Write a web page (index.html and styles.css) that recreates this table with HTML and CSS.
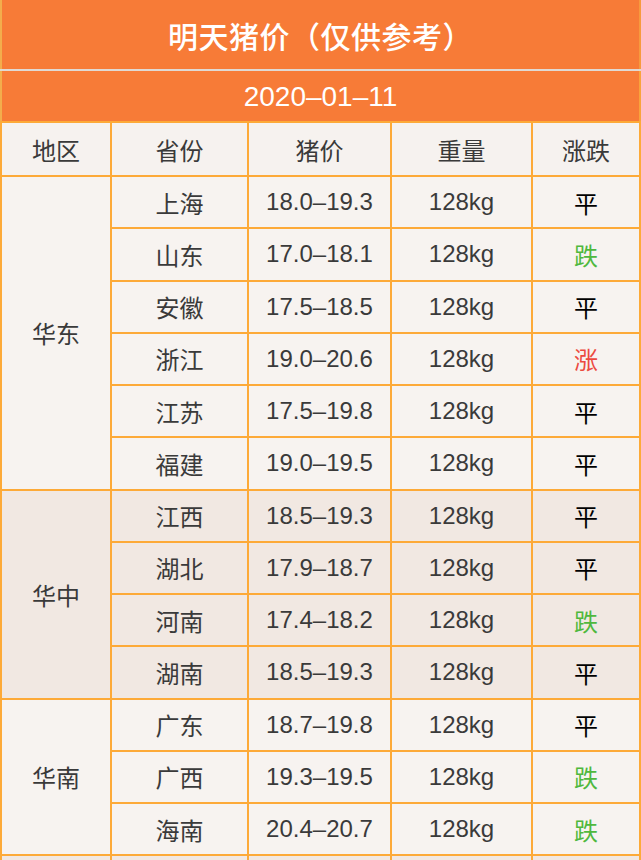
FILE: index.html
```html
<!DOCTYPE html>
<html lang="zh-CN">
<head>
<meta charset="utf-8">
<title>明天猪价</title>
<link rel="stylesheet" href="styles.css">
</head>
<body>
<div class="sheet">
  <div class="title">明天猪价（仅供参考）</div>
  <div class="date">2020–01–11</div>
  <div class="grid">
    <div class="cell head">地区</div>
    <div class="cell head">省份</div>
    <div class="cell head">猪价</div>
    <div class="cell head">重量</div>
    <div class="cell head">涨跌</div>

    <div class="cell region r6">华东</div>
    <div class="cell">上海</div><div class="cell">18.0–19.3</div><div class="cell">128kg</div><div class="cell flat">平</div>
    <div class="cell">山东</div><div class="cell">17.0–18.1</div><div class="cell">128kg</div><div class="cell down">跌</div>
    <div class="cell">安徽</div><div class="cell">17.5–18.5</div><div class="cell">128kg</div><div class="cell flat">平</div>
    <div class="cell">浙江</div><div class="cell">19.0–20.6</div><div class="cell">128kg</div><div class="cell up">涨</div>
    <div class="cell">江苏</div><div class="cell">17.5–19.8</div><div class="cell">128kg</div><div class="cell flat">平</div>
    <div class="cell">福建</div><div class="cell">19.0–19.5</div><div class="cell">128kg</div><div class="cell flat">平</div>

    <div class="cell alt region r4">华中</div>
    <div class="cell alt">江西</div><div class="cell alt">18.5–19.3</div><div class="cell alt">128kg</div><div class="cell alt flat">平</div>
    <div class="cell alt">湖北</div><div class="cell alt">17.9–18.7</div><div class="cell alt">128kg</div><div class="cell alt flat">平</div>
    <div class="cell alt">河南</div><div class="cell alt">17.4–18.2</div><div class="cell alt">128kg</div><div class="cell alt down">跌</div>
    <div class="cell alt">湖南</div><div class="cell alt">18.5–19.3</div><div class="cell alt">128kg</div><div class="cell alt flat">平</div>

    <div class="cell region r3">华南</div>
    <div class="cell">广东</div><div class="cell">18.7–19.8</div><div class="cell">128kg</div><div class="cell flat">平</div>
    <div class="cell">广西</div><div class="cell">19.3–19.5</div><div class="cell">128kg</div><div class="cell down">跌</div>
    <div class="cell">海南</div><div class="cell">20.4–20.7</div><div class="cell">128kg</div><div class="cell down">跌</div>

    <div class="cell alt"></div><div class="cell alt"></div><div class="cell alt"></div><div class="cell alt"></div><div class="cell alt"></div>
  </div>
</div>
</body>
</html>
```

FILE: styles.css
```css
html, body {
  margin: 0;
  padding: 0;
  background: #f7f3f0;
}

.sheet {
  width: 641px;
  font-family: "Liberation Sans", "Noto Sans CJK SC", sans-serif;
}

.title {
  height: 69px;
  border-bottom: 2px solid #e0d9d3;
  background: #f77b37;
  box-shadow: inset 2px 0 0 #f3ad4c, inset -2px 0 0 #f79a3e;
  color: #ffffff;
  font-family: "Noto Sans CJK SC", sans-serif;
  font-weight: 500;
  font-size: 30px;
  display: flex;
  align-items: center;
  justify-content: center;
  letter-spacing: 0.5px;
}

.date {
  height: 50px;
  background: #f77b37;
  box-shadow: inset 2px 0 0 #f3ad4c, inset -2px 0 0 #f9a33c;
  color: #ffffff;
  font-size: 28px;
  display: flex;
  align-items: center;
  justify-content: center;
  padding-top: 2px;
  box-sizing: border-box;
}

.grid {
  display: grid;
  grid-template-columns: 108px 135px 141px 139px 106px;
  grid-template-rows: 52px;
  grid-auto-rows: 50.25px;
  gap: 2px;
  padding: 2px;
  background: #fdaa38;
}

.cell {
  background: #f7f3f0;
  color: #3a3a3a;
  font-size: 24px;
  display: flex;
  align-items: center;
  justify-content: center;
}

.head {
  background: #f6f2ef;
}

.alt {
  background: #f1e8e2;
}

.region {
  grid-column: 1;
}

.r6 { grid-row: span 6; }
.r4 { grid-row: span 4; }
.r3 { grid-row: span 3; }

.flat {
  color: #000000;
}

.down {
  color: #4fb83d;
}

.up {
  color: #ec4a40;
}
```
